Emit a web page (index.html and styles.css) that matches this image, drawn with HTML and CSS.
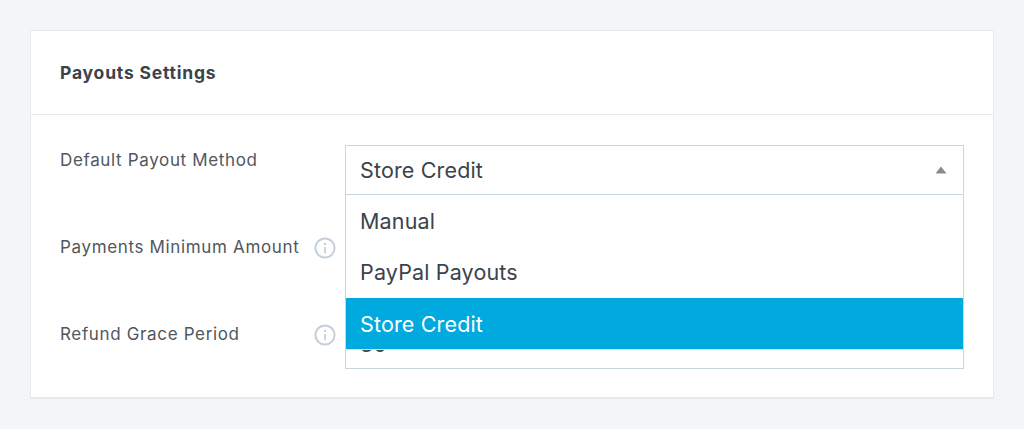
FILE: index.html
```html
<!DOCTYPE html>
<html lang="en">

<head>
    <meta charset="UTF-8" />
    <meta name="viewport" content="width=device-width, initial-scale=1.0" />
    <title>Payouts Settings</title>
    <link rel="stylesheet" href="styles.css">
</head>

<body>
    <div class="card">
        <div class="card-title">Payouts Settings</div>
        <div class="card-body">
            <div class="row first-row">
                <div class="label">Default Payout Method</div>
                <div class="field">
                    <div class="select">
                        <span>Store Credit</span>
                        <svg class="caret" width="12" height="8" viewBox="0 0 12 8"><path d="M6 0.5L11.5 7.5H0.5Z" fill="#8a8a8a"/></svg>
                    </div>
                    <div class="options">
                        <div class="option">Manual</div>
                        <div class="option">PayPal Payouts</div>
                        <div class="option selected">Store Credit</div>
                    </div>
                </div>
            </div>
            <div class="row second-row">
                <div class="label">Payments Minimum Amount
                    <svg class="info" width="22" height="22" viewBox="0 0 22 22" fill="none"><circle cx="11" cy="11" r="9.6" stroke="#c5d0dc" stroke-width="2"/><circle cx="11" cy="7" r="1.2" fill="#c5d0dc"/><path d="M11 10v6.2" stroke="#c5d0dc" stroke-width="1.8"/></svg>
                </div>
                <div class="field"></div>
            </div>
            <div class="row third-row">
                <div class="label">Refund Grace Period
                    <svg class="info" width="22" height="22" viewBox="0 0 22 22" fill="none"><circle cx="11" cy="11" r="9.6" stroke="#c5d0dc" stroke-width="2"/><circle cx="11" cy="7" r="1.2" fill="#c5d0dc"/><path d="M11 10v6.2" stroke="#c5d0dc" stroke-width="1.8"/></svg>
                </div>
                <div class="field">
                    <div class="text-input">30</div>
                </div>
            </div>
        </div>
    </div>
</body>

</html>
```

FILE: styles.css
```css
body {
    margin: 0;
    padding: 30px;
    background-color: #f3f5f7;
    font-family: Inter, "Noto Sans", sans-serif;
    color: #50575e;
}

.card {
    width: 964px;
    height: 369px;
    box-sizing: border-box;
    background-color: white;
    border: 2px solid #e6eaee;
    border-width: 1px 1px 2px 1px;
    overflow: hidden;
}

.card-title {
    height: 84px;
    box-sizing: border-box;
    padding: 32px 29px 0;
    font-size: 17.5px;
    line-height: 20px;
    letter-spacing: 0.8px;
    font-weight: 700;
    color: #3c434a;
    border-bottom: 1px solid #e6eaee;
}

.card-body {
    padding: 30px 29px;
}

.row {
    display: flex;
    height: 87px;
}

.label {
    width: 285px;
    flex-shrink: 0;
    display: flex;
    align-items: flex-start;
    font-size: 17px;
    line-height: 30px;
    letter-spacing: 0.65px;
    white-space: nowrap;
}

.info {
    position: absolute;
    margin-left: 254px;
    margin-top: 5px;
}

.field {
    width: 619px;
    position: relative;
}

.select {
    height: 50px;
    box-sizing: border-box;
    display: flex;
    align-items: center;
    justify-content: space-between;
    padding: 0 16px 0 14px;
    background-color: white;
    border: 1px solid #c8d7de;
    font-size: 21.5px;
    letter-spacing: 0.15px;
    color: #3c434a;
}

.options {
    position: absolute;
    left: 0;
    right: 0;
    top: 49px;
    z-index: 2;
    background-color: white;
    border: 1px solid #c8d7de;
    border-bottom: none;
}

.option {
    height: 51.3px;
    box-sizing: border-box;
    padding-left: 14px;
    font-size: 21.5px;
    letter-spacing: 0.15px;
    line-height: 53px;
    color: #3c434a;
}

.option.selected {
    background-color: #00a9de;
    color: white;
    box-shadow: 0 1px 0 #bfe8f6;
}

.text-input {
    height: 49px;
    margin-top: 1px;
    box-sizing: border-box;
    padding: 0 14px;
    border: 1px solid #c8d7de;
    font-size: 21.5px;
    line-height: 46px;
    color: #3c434a;
}
```
